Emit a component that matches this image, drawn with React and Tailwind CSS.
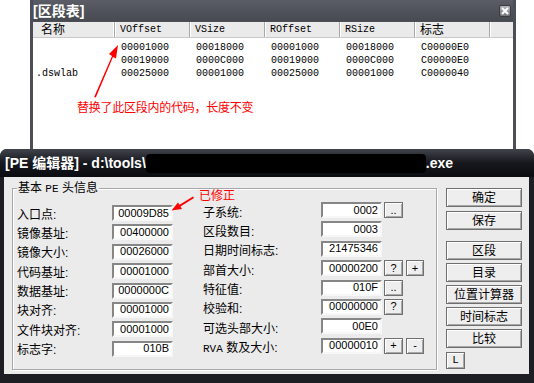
import React from "react";

const SANS = "[font-family:'Liberation_Sans','Noto_Sans_CJK_SC',sans-serif]";
const MONO = "[font-family:'Liberation_Mono','Noto_Sans_CJK_SC',monospace]";

const cols = ["VOffset", "VSize", "ROffset", "RSize", "标志"];
const rows = [
  ["", "00001000", "00018000", "00001000", "00018000", "C00000E0"],
  ["", "00019000", "0000C000", "00019000", "0000C000", "C00000E0"],
  [".dswlab", "00025000", "00001000", "00025000", "00001000", "C0000040"],
];

function Edit({ value, w = "w-[61px]" }) {
  return (
    <div
      className={`${w} h-[16px] shrink-0 bg-white border-2 border-t-[#868686] border-l-[#868686] border-r-[#f7f7f7] border-b-[#f7f7f7] flex items-center justify-end pr-[2px] text-[11px] leading-none text-black ${SANS}`}
    >
      {value}
    </div>
  );
}

function SmallBtn({ children, w = "w-[19px]" }) {
  return (
    <div
      className={`${w} h-[16px] shrink-0 bg-[#efeeee] border border-[#707070] shadow-[inset_1px_1px_0_#fff,inset_-1px_-1px_0_#a8a8a8] flex items-center justify-center text-[11px] leading-none text-black ${SANS}`}
    >
      {children}
    </div>
  );
}

function Btn({ children, className = "" }) {
  return (
    <div
      className={`w-[76px] h-[19px] shrink-0 bg-[#efeeee] border border-[#6f6f6f] shadow-[inset_1px_1px_0_#fff,inset_-1px_-1px_0_#a8a8a8] flex items-center justify-center text-[12px] leading-none text-black ${SANS} ${className}`}
    >
      {children}
    </div>
  );
}

const leftRows = [
  ["入口点:", "00009D85"],
  ["镜像基址:", "00400000"],
  ["镜像大小:", "00026000"],
  ["代码基址:", "00001000"],
  ["数据基址:", "0000000C"],
  ["块对齐:", "00001000"],
  ["文件块对齐:", "00001000"],
  ["标志字:", "010B"],
];

const midRows = [
  ["子系统:", "0002", [".."]],
  ["区段数目:", "0003", []],
  ["日期时间标志:", "21475346", []],
  ["部首大小:", "00000200", ["?", "+"]],
  ["特征值:", "010F", [".."]],
  ["校验和:", "00000000", ["?"]],
  ["可选头部大小:", "00E0", []],
  [
    <span key="rva">
      <span className={`${MONO} text-[11px]`}>RVA</span> 数及大小:
    </span>,
    "00000010",
    ["+", "-"],
  ],
];

export default function App() {
  return (
    <div className={`relative w-[534px] h-[383px] bg-white overflow-hidden ${SANS}`}>
      {/* Section table window */}
      <div className="absolute left-[30px] top-0 w-[486px] h-[152px] bg-[#4c4f57] px-[3px] flex flex-col">
        <div className="h-[21px] shrink-0 flex items-center justify-between bg-gradient-to-b from-[#5a5d65] to-[#474a51]">
          <span className="text-white font-bold text-[14px] leading-none">[区段表]</span>
          <div className="w-[12px] h-[12px] mr-[2px] rounded-[2px] bg-gradient-to-b from-[#b4b7bd] to-[#73767c] border border-[#3a3c42] flex items-center justify-center">
            <svg width="8" height="8" viewBox="0 0 8 8">
              <path d="M1 1 L7 7 M7 1 L1 7" stroke="#fff" strokeWidth="2" />
            </svg>
          </div>
        </div>
        <div className="h-[1px] shrink-0" />
        <div className="flex-1 bg-white flex flex-col overflow-hidden">
          <div className="h-[16px] shrink-0 flex bg-[#ebeaea] border-b border-[#c9c9c9]">
            <div className="w-[82px] shrink-0 border-r border-[#a9a9a9] shadow-[inset_-1px_0_0_#fff] pl-[8px] flex items-center text-[12px] leading-none text-black">
              名称
            </div>
            {cols.map((c) => (
              <div
                key={c}
                className={`w-[75px] shrink-0 border-r border-[#a9a9a9] shadow-[inset_1px_0_0_#fff] pl-[5px] flex items-center leading-none text-black ${
                  c === "标志" ? "text-[12px]" : `${MONO} text-[10px]`
                }`}
              >
                {c}
              </div>
            ))}
            <div className="flex-1 shadow-[inset_1px_0_0_#fff]" />
          </div>
          <div className="pt-[3px] flex flex-col">
            {rows.map((r, i) => (
              <div key={i} className={`h-[13px] flex items-center text-[10px] leading-none text-black ${MONO}`}>
                <div className="w-[82px] shrink-0 pl-[3px]">{r[0]}</div>
                {r.slice(1).map((v, j) => (
                  <div key={j} className="w-[75px] shrink-0 pl-[6px]">
                    {v}
                  </div>
                ))}
              </div>
            ))}
          </div>
        </div>
      </div>

      {/* Red annotation on section table */}
      <svg className="absolute left-0 top-0" width="534" height="150" viewBox="0 0 534 150">
        <polygon points="94.2,97 95.8,97.6 113,57 116,58.5 118,45 109,54 112,56" fill="#ff0000" />
      </svg>
      <div className="absolute left-[77px] top-[100px] text-[12px] leading-[16px] text-[#ff0000] tracking-[-0.25px]">
        替换了此区段内的代码，长度不变
      </div>

      {/* PE editor window */}
      <div className="absolute left-0 top-[149px] w-[534px] h-[234px] rounded-t-[7px] bg-[#1c1e24] flex flex-col overflow-hidden">
        <div className="h-[28px] shrink-0 flex items-center pl-[5px] bg-gradient-to-b from-[#41444c] via-[#16181d] to-[#0b0c10]">
          <span className="text-white font-bold text-[14px] leading-none whitespace-pre">[PE 编辑器] - d:\tools\</span>
          <div className="w-[280px] h-[19px] bg-black rounded-[4px] shrink-0" />
          <span className="text-white font-bold text-[14px] leading-none">.exe</span>
        </div>
        <div className="flex-1 ml-[4px] mr-[5px] mb-[9px] bg-[#ecebeb] flex items-start">
          {/* Group box */}
          <div className="relative ml-[8px] mt-[11px] w-[425px] h-[182px] border border-[#a8a7ab] shadow-[inset_1px_1px_0_#fff,1px_1px_0_#fff] flex">
            <div className="absolute left-[4px] -top-[9px] px-[1px] bg-[#ecebeb] text-[12px] leading-[16px] text-black">
              基本 <span className={`${MONO} text-[11px]`}>PE</span> 头信息
            </div>
            <div className="pl-[4px] pt-[16px] flex flex-col gap-[3.4px]">
              {leftRows.map(([l, v]) => (
                <div key={l} className="h-[16px] flex items-center">
                  <div className="w-[95px] shrink-0 text-[12px] leading-none text-black pt-[3px]">{l}</div>
                  <Edit value={v} />
                </div>
              ))}
            </div>
            <div className="ml-[30px] pt-[13px] flex flex-col gap-[3.4px]">
              {midRows.map(([l, v, btns], i) => (
                <div key={i} className="h-[16px] flex items-center">
                  <div className="w-[118px] shrink-0 text-[12px] leading-none text-black pt-[5px]">{l}</div>
                  <Edit value={v} />
                  {btns.map((b, k) => (
                    <div key={k} className={k === 0 ? "ml-[2px]" : "ml-[3px]"}>
                      <SmallBtn w={k === 0 ? "w-[19px]" : "w-[18px]"}>{b}</SmallBtn>
                    </div>
                  ))}
                </div>
              ))}
            </div>
          </div>
          {/* Right buttons */}
          <div className="ml-[9px] pt-[11px] flex flex-col">
            <Btn>确定</Btn>
            <Btn className="mt-[4px]">保存</Btn>
            <Btn className="mt-[11px]">区段</Btn>
            <Btn className="mt-[3px]">目录</Btn>
            <Btn className="mt-[3px]">位置计算器</Btn>
            <Btn className="mt-[3px]">时间标志</Btn>
            <Btn className="mt-[3px]">比较</Btn>
            <div
              className={`mt-[4px] w-[19px] h-[17px] bg-[#efeeee] border border-[#6f6f6f] shadow-[inset_1px_1px_0_#fff,inset_-1px_-1px_0_#a8a8a8] flex items-center justify-center text-[11px] leading-none text-black ${MONO}`}
            >
              L
            </div>
          </div>
        </div>
      </div>

      {/* Red annotation on PE editor */}
      <svg className="absolute left-0 top-[185px]" width="260" height="40" viewBox="0 0 260 40">
        <polygon points="193,11.5 194,13 180.5,21.5 182,24 171.5,25.5 178,17.5 179.5,19.8" fill="#ff0000" />
      </svg>
      <div className="absolute left-[199px] top-[188px] text-[12px] leading-[16px] text-[#ff0000]">已修正</div>
    </div>
  );
}
